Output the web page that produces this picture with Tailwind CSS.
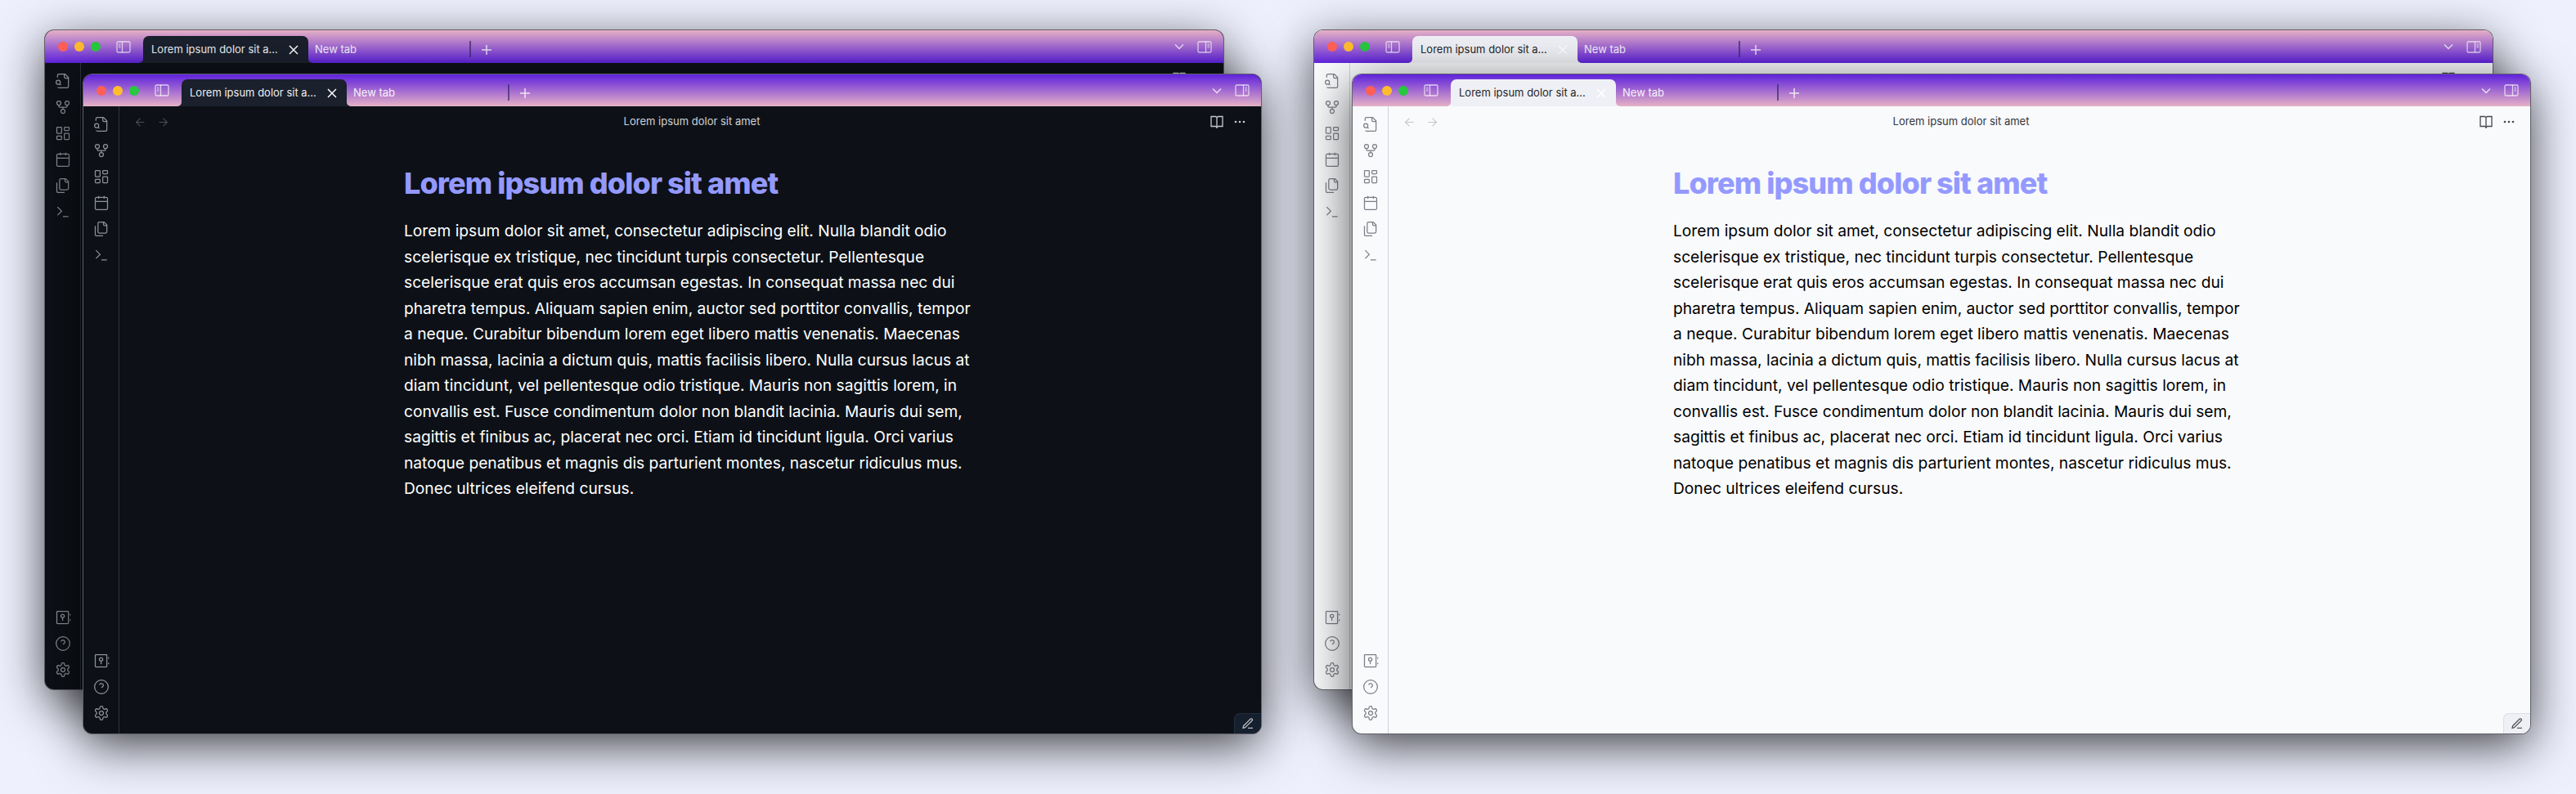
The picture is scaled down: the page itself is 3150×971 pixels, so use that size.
<!DOCTYPE html>
<html>
<head>
<meta charset="utf-8">
<script src="https://cdn.jsdelivr.net/npm/@tailwindcss/browser@4"></script>
</head>
<body class="m-0 bg-[#eef0fe] font-['Inter',sans-serif]">
<svg class="hidden">
<symbol id="filesearch" viewBox="0 0 24 24"><path d="M14 2v4a2 2 0 0 0 2 2h4"/><path d="M4.268 21a2 2 0 0 0 1.727 1H18a2 2 0 0 0 2-2V7l-5-5H6a2 2 0 0 0-2 2v3"/><path d="m9 18-1.5-1.5"/><circle cx="5" cy="14" r="3"/></symbol>
<symbol id="fork" viewBox="0 0 24 24"><circle cx="12" cy="18" r="3"/><circle cx="6" cy="6" r="3"/><circle cx="18" cy="6" r="3"/><path d="M18 9v2c0 .6-.4 1-1 1H7c-.6 0-1-.4-1-1V9"/><path d="M12 12v3"/></symbol>
<symbol id="dash" viewBox="0 0 24 24"><rect x="3" y="3" width="7" height="9" rx="1"/><rect x="14" y="3" width="7" height="5" rx="1"/><rect x="14" y="12" width="7" height="9" rx="1"/><rect x="3" y="16" width="7" height="5" rx="1"/></symbol>
<symbol id="cal" viewBox="0 0 24 24"><path d="M8 2v4"/><path d="M16 2v4"/><rect x="3" y="4" width="18" height="18" rx="2"/><path d="M3 10h18"/></symbol>
<symbol id="files" viewBox="0 0 24 24"><path d="M20 7h-3a2 2 0 0 1-2-2V2"/><path d="M9 18a2 2 0 0 1-2-2V4a2 2 0 0 1 2-2h7l4 4v10a2 2 0 0 1-2 2Z"/><path d="M3 7.6v12.8A1.6 1.6 0 0 0 4.6 22h9.8"/></symbol>
<symbol id="term" viewBox="0 0 24 24"><path d="m4 17 6-6-6-6"/><path d="M12 19h8"/></symbol>
<symbol id="vault" viewBox="0 0 24 24"><rect x="3" y="3" width="17" height="18" rx="1"/><circle cx="11.5" cy="10" r="2.5"/><path d="M11.5 12.5V17"/><path d="M22.5 7v2"/><path d="M22.5 15v2"/></symbol>
<symbol id="help" viewBox="0 0 24 24"><circle cx="12" cy="12" r="10"/><path d="M9.09 9a3 3 0 0 1 5.83 1c0 2-3 3-3 3"/><path d="M12 17h.01"/></symbol>
<symbol id="gear" viewBox="0 0 24 24"><path d="M12.22 2h-.44a2 2 0 0 0-2 2v.18a2 2 0 0 1-1 1.73l-.43.25a2 2 0 0 1-2 0l-.15-.08a2 2 0 0 0-2.73.73l-.22.38a2 2 0 0 0 .73 2.73l.15.1a2 2 0 0 1 1 1.72v.51a2 2 0 0 1-1 1.74l-.15.09a2 2 0 0 0-.73 2.73l.22.38a2 2 0 0 0 2.73.73l.15-.08a2 2 0 0 1 2 0l.43.25a2 2 0 0 1 1 1.73V20a2 2 0 0 0 2 2h.44a2 2 0 0 0 2-2v-.18a2 2 0 0 1 1-1.73l.43-.25a2 2 0 0 1 2 0l.15.08a2 2 0 0 0 2.73-.73l.22-.39a2 2 0 0 0-.73-2.73l-.15-.08a2 2 0 0 1-1-1.74v-.5a2 2 0 0 1 1-1.74l.15-.09a2 2 0 0 0 .73-2.73l-.22-.38a2 2 0 0 0-2.73-.73l-.15.08a2 2 0 0 1-2 0l-.43-.25a2 2 0 0 1-1-1.73V4a2 2 0 0 0-2-2z"/><circle cx="12" cy="12" r="3"/></symbol>
<symbol id="sideL" viewBox="0 0 18 15"><rect x="1" y="1" width="16" height="13" rx="1.5"/><path d="M7.5 1v13"/><path d="M3 4h2.5M3 6h2.5M3 8h2.5" stroke-width="1"/></symbol>
<symbol id="sideR" viewBox="0 0 18 15"><rect x="1" y="1" width="16" height="13" rx="1.5"/><path d="M10.5 1v13"/><path d="M12.5 4H15M12.5 6H15M12.5 8H15" stroke-width="1"/></symbol>
<symbol id="close" viewBox="0 0 24 24"><path d="M18 6 6 18"/><path d="m6 6 12 12"/></symbol>
<symbol id="plus" viewBox="0 0 12 12"><path d="M6 0v12M0 6h12"/></symbol>
<symbol id="chev" viewBox="0 0 12 8"><path d="m1 1.5 5 5 5-5"/></symbol>
<symbol id="left" viewBox="0 0 24 24"><path d="m12 19-7-7 7-7"/><path d="M19 12H5"/></symbol>
<symbol id="right" viewBox="0 0 24 24"><path d="M5 12h14"/><path d="m12 5 7 7-7 7"/></symbol>
<symbol id="book" viewBox="0 0 18 18"><path d="M2 2.5h5.5L9 3.5l1.500-1H16v12h-5.500L9 15.500 7.500 14.500H2z"/><path d="M9 3.500V17"/></symbol>
<symbol id="dots" viewBox="0 0 14 4"><circle cx="2" cy="2" r="1.300"/><circle cx="7" cy="2" r="1.300"/><circle cx="12" cy="2" r="1.300"/></symbol>
<symbol id="pen" viewBox="0 0 24 24"><path d="M12 20h9"/><path d="M16.500 3.500a2.120 2.120 0 0 1 3 3L7 19l-4 1 1-4Z"/></symbol>
<symbol id="flare" viewBox="0 0 5 5"><path d="M5 0v5H0a5 5 0 0 0 5-5z"/></symbol>
</svg>

<main class="relative w-[3150px] h-[971px] overflow-hidden bg-[#eef0fe]">

<!-- DARK BACK -->
<section class="absolute left-[55px] top-[37px] w-[1441px] h-[806px] rounded-[11px] flex flex-col overflow-hidden bg-[#0d1117] shadow-[0_0_0_1px_#60606a,0_15px_60px_rgba(0,0,0,0.7)]">
  <header class="h-10 shrink-0 flex items-end bg-linear-to-b/srgb from-[#e6b1c6] to-[#5e22dc] text-white">
    <div class="w-[120px] h-full flex items-center shrink-0">
      <div class="flex gap-2 pl-4">
        <span class="w-3 h-3 rounded-full bg-[#ff5f57]"></span><span class="w-3 h-3 rounded-full bg-[#febc2e]"></span><span class="w-3 h-3 rounded-full bg-[#28c840]"></span>
      </div>
      <svg class="w-[18px] h-[15px] ml-[19px] fill-none stroke-[1.300] stroke-white/70"><use href="#sideL"/></svg>
    </div>
    <div class="relative w-[202px] h-[33px] rounded-t-[7px] bg-[#1a202c] flex items-center justify-between pl-[10px] pr-2 text-[13px] text-[#eceef2]">
      <svg class="absolute left-[-5px] bottom-0 w-[5px] h-[5px] fill-[#1a202c]"><use href="#flare"/></svg>
      <svg class="absolute right-[-5px] bottom-0 w-[5px] h-[5px] fill-[#1a202c] -scale-x-100"><use href="#flare"/></svg>
      <span class="whitespace-nowrap">Lorem ipsum dolor sit a...</span>
      <svg class="w-5 h-5 fill-none stroke-[1.800] stroke-white"><use href="#close"/></svg>
    </div>
    <div class="w-[199px] h-[33px] flex items-center pl-2 text-[13px] text-white/90 relative">New tab<span class="absolute right-0 top-[6px] w-[2px] h-5 bg-[#3b2a6a]/70"></span></div>
    <div class="h-[33px] flex items-center pl-[13px]"><svg class="w-3 h-3 fill-none stroke-[1.500] stroke-white/80"><use href="#plus"/></svg></div>
    <div class="h-full flex-1 flex items-center justify-end pr-[14px] gap-4">
      <svg class="w-3 h-2 fill-none stroke-[1.300] stroke-white/80"><use href="#chev"/></svg>
      <svg class="w-[18px] h-[15px] fill-none stroke-[1.300] stroke-white/70"><use href="#sideR"/></svg>
    </div>
  </header>
  <div class="flex flex-1 min-h-0">
    <nav class="w-[44px] shrink-0 border-r border-[#2d3340] flex flex-col items-center justify-between pt-3 pb-[14px] text-[#8f9298]">
      <div class="flex flex-col gap-3">
        <svg class="w-5 h-5 fill-none stroke-[1.500] stroke-current"><use href="#filesearch"/></svg>
        <svg class="w-5 h-5 fill-none stroke-[1.500] stroke-current"><use href="#fork"/></svg>
        <svg class="w-5 h-5 fill-none stroke-[1.500] stroke-current"><use href="#dash"/></svg>
        <svg class="w-5 h-5 fill-none stroke-[1.500] stroke-current"><use href="#cal"/></svg>
        <svg class="w-5 h-5 fill-none stroke-[1.500] stroke-current"><use href="#files"/></svg>
        <svg class="w-5 h-5 fill-none stroke-[1.500] stroke-current"><use href="#term"/></svg>
      </div>
      <div class="flex flex-col gap-3">
        <svg class="w-5 h-5 fill-none stroke-[1.500] stroke-current"><use href="#vault"/></svg>
        <svg class="w-5 h-5 fill-none stroke-[1.500] stroke-current"><use href="#help"/></svg>
        <svg class="w-5 h-5 fill-none stroke-[1.500] stroke-current"><use href="#gear"/></svg>
      </div>
    </nav>
    <div class="flex-1 min-w-0">
      <div class="h-[38px] flex items-center justify-end gap-3 pr-[19px] text-[#c8cacd]">
        <svg class="w-[18px] h-[18px] fill-none stroke-[1.300] stroke-current"><use href="#book"/></svg>
        <svg class="w-[14px] h-1 fill-current"><use href="#dots"/></svg>
      </div>
    </div>
  </div>
</section>

<!-- DARK FRONT -->
<section class="absolute left-[102px] top-[91px] w-[1440px] h-[806px] rounded-[11px] flex flex-col overflow-hidden bg-[#0d1117] shadow-[0_0_0_1px_#60606a,0_15px_60px_rgba(0,0,0,0.7)]">
  <header class="h-[39px] shrink-0 flex items-end bg-linear-to-b/srgb from-[#5e22dc] to-[#e6b1c6] text-white">
    <div class="w-[120px] h-full flex items-center shrink-0">
      <div class="flex gap-2 pl-4">
        <span class="w-3 h-3 rounded-full bg-[#ff5f57]"></span><span class="w-3 h-3 rounded-full bg-[#febc2e]"></span><span class="w-3 h-3 rounded-full bg-[#28c840]"></span>
      </div>
      <svg class="w-[18px] h-[15px] ml-[19px] fill-none stroke-[1.300] stroke-white/70"><use href="#sideL"/></svg>
    </div>
    <div class="relative w-[202px] h-[33px] rounded-t-[7px] bg-[#1a202c] flex items-center justify-between pl-[10px] pr-2 text-[13px] text-[#eceef2]">
      <svg class="absolute left-[-5px] bottom-0 w-[5px] h-[5px] fill-[#1a202c]"><use href="#flare"/></svg>
      <svg class="absolute right-[-5px] bottom-0 w-[5px] h-[5px] fill-[#1a202c] -scale-x-100"><use href="#flare"/></svg>
      <span class="whitespace-nowrap">Lorem ipsum dolor sit a...</span>
      <svg class="w-5 h-5 fill-none stroke-[1.800] stroke-white"><use href="#close"/></svg>
    </div>
    <div class="w-[199px] h-[33px] flex items-center pl-2 text-[13px] text-white/90 relative">New tab<span class="absolute right-0 top-[6px] w-[2px] h-5 bg-[#3b2a6a]/70"></span></div>
    <div class="h-[33px] flex items-center pl-[13px]"><svg class="w-3 h-3 fill-none stroke-[1.500] stroke-white/80"><use href="#plus"/></svg></div>
    <div class="h-full flex-1 flex items-center justify-end pr-[14px] gap-4">
      <svg class="w-3 h-2 fill-none stroke-[1.300] stroke-white/80"><use href="#chev"/></svg>
      <svg class="w-[18px] h-[15px] fill-none stroke-[1.300] stroke-white/70"><use href="#sideR"/></svg>
    </div>
  </header>
  <div class="flex flex-1 min-h-0">
    <nav class="w-[44px] shrink-0 border-r border-[#2d3340] flex flex-col items-center justify-between pt-3 pb-[15px] text-[#8f9298]">
      <div class="flex flex-col gap-3">
        <svg class="w-5 h-5 fill-none stroke-[1.500] stroke-current"><use href="#filesearch"/></svg>
        <svg class="w-5 h-5 fill-none stroke-[1.500] stroke-current"><use href="#fork"/></svg>
        <svg class="w-5 h-5 fill-none stroke-[1.500] stroke-current"><use href="#dash"/></svg>
        <svg class="w-5 h-5 fill-none stroke-[1.500] stroke-current"><use href="#cal"/></svg>
        <svg class="w-5 h-5 fill-none stroke-[1.500] stroke-current"><use href="#files"/></svg>
        <svg class="w-5 h-5 fill-none stroke-[1.500] stroke-current"><use href="#term"/></svg>
      </div>
      <div class="flex flex-col gap-3">
        <svg class="w-5 h-5 fill-none stroke-[1.500] stroke-current"><use href="#vault"/></svg>
        <svg class="w-5 h-5 fill-none stroke-[1.500] stroke-current"><use href="#help"/></svg>
        <svg class="w-5 h-5 fill-none stroke-[1.500] stroke-current"><use href="#gear"/></svg>
      </div>
    </nav>
    <div class="relative flex-1 flex flex-col min-w-0">
      <div class="h-[38px] flex items-center justify-between pl-[17px] pr-[19px] text-[#9a9da3]">
        <div class="flex gap-[11px] text-[#4a4d53]">
          <svg class="w-[17px] h-[17px] fill-none stroke-[1.500] stroke-current"><use href="#left"/></svg>
          <svg class="w-[17px] h-[17px] fill-none stroke-[1.500] stroke-current"><use href="#right"/></svg>
        </div>
        <span class="ml-[5px] text-[13px] text-[#cfd2d6]">Lorem ipsum dolor sit amet</span>
        <div class="flex items-center gap-3 text-[#c8cacd]">
          <svg class="w-[18px] h-[18px] fill-none stroke-[1.300] stroke-current"><use href="#book"/></svg>
          <svg class="w-[14px] h-1 fill-current"><use href="#dots"/></svg>
        </div>
      </div>
      <article class="w-[700px] mx-auto pt-[34px] text-white">
        <h1 class="text-[36px] leading-[44px] font-extrabold tracking-[-0.025em] text-[#9499ff]">Lorem ipsum dolor sit amet</h1>
        <p class="mt-[21px] text-[19.200px] leading-[31.500px]">Lorem ipsum dolor sit amet, consectetur adipiscing elit. Nulla blandit odio scelerisque ex tristique, nec tincidunt turpis consectetur. Pellentesque scelerisque erat quis eros accumsan egestas. In consequat massa nec dui pharetra tempus. Aliquam sapien enim, auctor sed porttitor convallis, tempor a neque. Curabitur bibendum lorem eget libero mattis venenatis. Maecenas nibh massa, lacinia a dictum quis, mattis facilisis libero. Nulla cursus lacus at diam tincidunt, vel pellentesque odio tristique. Mauris non sagittis lorem, in convallis est. Fusce condimentum dolor non blandit lacinia. Mauris dui sem, sagittis et finibus ac, placerat nec orci. Etiam id tincidunt ligula. Orci varius natoque penatibus et magnis dis parturient montes, nascetur ridiculus mus. Donec ultrices eleifend cursus.</p>
      </article>
      <div class="absolute right-0 bottom-0 w-[33px] h-[25px] rounded-tl-[7px] bg-[#161f2e] border-l border-t border-[#232c3c] flex items-center justify-center text-[#b9bbbf]">
        <svg class="w-4 h-4 fill-none stroke-2 stroke-current"><use href="#pen"/></svg>
      </div>
    </div>
  </div>
</section>

<!-- LIGHT BACK -->
<section class="absolute left-[1607px] top-[37px] w-[1441px] h-[806px] rounded-[11px] flex flex-col overflow-hidden bg-[#f9fafc] shadow-[0_0_0_1px_#60606a,0_15px_60px_rgba(0,0,0,0.7)]">
  <header class="h-10 shrink-0 flex items-end bg-linear-to-b/srgb from-[#e6b1c6] to-[#5e22dc] text-white">
    <div class="w-[120px] h-full flex items-center shrink-0">
      <div class="flex gap-2 pl-4">
        <span class="w-3 h-3 rounded-full bg-[#ff5f57]"></span><span class="w-3 h-3 rounded-full bg-[#febc2e]"></span><span class="w-3 h-3 rounded-full bg-[#28c840]"></span>
      </div>
      <svg class="w-[18px] h-[15px] ml-[19px] fill-none stroke-[1.300] stroke-white/70"><use href="#sideL"/></svg>
    </div>
    <div class="relative w-[202px] h-[33px] rounded-t-[7px] bg-[#eff0f5] flex items-center justify-between pl-[10px] pr-2 text-[13px] text-[#24262b]">
      <svg class="absolute left-[-5px] bottom-0 w-[5px] h-[5px] fill-[#eff0f5]"><use href="#flare"/></svg>
      <svg class="absolute right-[-5px] bottom-0 w-[5px] h-[5px] fill-[#eff0f5] -scale-x-100"><use href="#flare"/></svg>
      <span class="whitespace-nowrap">Lorem ipsum dolor sit a...</span>
      <svg class="w-5 h-5 fill-none stroke-[1.800] stroke-white"><use href="#close"/></svg>
    </div>
    <div class="w-[199px] h-[33px] flex items-center pl-2 text-[13px] text-white/90 relative">New tab<span class="absolute right-0 top-[6px] w-[2px] h-5 bg-[#3b2a6a]/70"></span></div>
    <div class="h-[33px] flex items-center pl-[13px]"><svg class="w-3 h-3 fill-none stroke-[1.500] stroke-white/80"><use href="#plus"/></svg></div>
    <div class="h-full flex-1 flex items-center justify-end pr-[14px] gap-4">
      <svg class="w-3 h-2 fill-none stroke-[1.300] stroke-white/80"><use href="#chev"/></svg>
      <svg class="w-[18px] h-[15px] fill-none stroke-[1.300] stroke-white/70"><use href="#sideR"/></svg>
    </div>
  </header>
  <div class="flex flex-1 min-h-0">
    <nav class="w-[44px] shrink-0 border-r border-[#cfd2dc] flex flex-col items-center justify-between pt-3 pb-[14px] text-[#7b7e85]">
      <div class="flex flex-col gap-3">
        <svg class="w-5 h-5 fill-none stroke-[1.500] stroke-current"><use href="#filesearch"/></svg>
        <svg class="w-5 h-5 fill-none stroke-[1.500] stroke-current"><use href="#fork"/></svg>
        <svg class="w-5 h-5 fill-none stroke-[1.500] stroke-current"><use href="#dash"/></svg>
        <svg class="w-5 h-5 fill-none stroke-[1.500] stroke-current"><use href="#cal"/></svg>
        <svg class="w-5 h-5 fill-none stroke-[1.500] stroke-current"><use href="#files"/></svg>
        <svg class="w-5 h-5 fill-none stroke-[1.500] stroke-current"><use href="#term"/></svg>
      </div>
      <div class="flex flex-col gap-3">
        <svg class="w-5 h-5 fill-none stroke-[1.500] stroke-current"><use href="#vault"/></svg>
        <svg class="w-5 h-5 fill-none stroke-[1.500] stroke-current"><use href="#help"/></svg>
        <svg class="w-5 h-5 fill-none stroke-[1.500] stroke-current"><use href="#gear"/></svg>
      </div>
    </nav>
    <div class="flex-1 min-w-0">
      <div class="h-[38px] flex items-center justify-end gap-3 pr-[19px] text-[#45474c]">
        <svg class="w-[18px] h-[18px] fill-none stroke-[1.300] stroke-current"><use href="#book"/></svg>
        <svg class="w-[14px] h-1 fill-current"><use href="#dots"/></svg>
      </div>
    </div>
  </div>
</section>

<!-- LIGHT FRONT -->
<section class="absolute left-[1654px] top-[91px] w-[1440px] h-[806px] rounded-[11px] flex flex-col overflow-hidden bg-[#f9fafc] shadow-[0_0_0_1px_#60606a,0_15px_60px_rgba(0,0,0,0.7)]">
  <header class="h-[39px] shrink-0 flex items-end bg-linear-to-b/srgb from-[#5e22dc] to-[#e6b1c6] text-white">
    <div class="w-[120px] h-full flex items-center shrink-0">
      <div class="flex gap-2 pl-4">
        <span class="w-3 h-3 rounded-full bg-[#ff5f57]"></span><span class="w-3 h-3 rounded-full bg-[#febc2e]"></span><span class="w-3 h-3 rounded-full bg-[#28c840]"></span>
      </div>
      <svg class="w-[18px] h-[15px] ml-[19px] fill-none stroke-[1.300] stroke-white/70"><use href="#sideL"/></svg>
    </div>
    <div class="relative w-[202px] h-[33px] rounded-t-[7px] bg-[#eff0f5] flex items-center justify-between pl-[10px] pr-2 text-[13px] text-[#24262b]">
      <svg class="absolute left-[-5px] bottom-0 w-[5px] h-[5px] fill-[#eff0f5]"><use href="#flare"/></svg>
      <svg class="absolute right-[-5px] bottom-0 w-[5px] h-[5px] fill-[#eff0f5] -scale-x-100"><use href="#flare"/></svg>
      <span class="whitespace-nowrap">Lorem ipsum dolor sit a...</span>
      <svg class="w-5 h-5 fill-none stroke-[1.800] stroke-white"><use href="#close"/></svg>
    </div>
    <div class="w-[199px] h-[33px] flex items-center pl-2 text-[13px] text-white/90 relative">New tab<span class="absolute right-0 top-[6px] w-[2px] h-5 bg-[#3b2a6a]/70"></span></div>
    <div class="h-[33px] flex items-center pl-[13px]"><svg class="w-3 h-3 fill-none stroke-[1.500] stroke-white/80"><use href="#plus"/></svg></div>
    <div class="h-full flex-1 flex items-center justify-end pr-[14px] gap-4">
      <svg class="w-3 h-2 fill-none stroke-[1.300] stroke-white/80"><use href="#chev"/></svg>
      <svg class="w-[18px] h-[15px] fill-none stroke-[1.300] stroke-white/70"><use href="#sideR"/></svg>
    </div>
  </header>
  <div class="flex flex-1 min-h-0">
    <nav class="w-[44px] shrink-0 border-r border-[#cfd2dc] flex flex-col items-center justify-between pt-3 pb-[15px] text-[#7b7e85]">
      <div class="flex flex-col gap-3">
        <svg class="w-5 h-5 fill-none stroke-[1.500] stroke-current"><use href="#filesearch"/></svg>
        <svg class="w-5 h-5 fill-none stroke-[1.500] stroke-current"><use href="#fork"/></svg>
        <svg class="w-5 h-5 fill-none stroke-[1.500] stroke-current"><use href="#dash"/></svg>
        <svg class="w-5 h-5 fill-none stroke-[1.500] stroke-current"><use href="#cal"/></svg>
        <svg class="w-5 h-5 fill-none stroke-[1.500] stroke-current"><use href="#files"/></svg>
        <svg class="w-5 h-5 fill-none stroke-[1.500] stroke-current"><use href="#term"/></svg>
      </div>
      <div class="flex flex-col gap-3">
        <svg class="w-5 h-5 fill-none stroke-[1.500] stroke-current"><use href="#vault"/></svg>
        <svg class="w-5 h-5 fill-none stroke-[1.500] stroke-current"><use href="#help"/></svg>
        <svg class="w-5 h-5 fill-none stroke-[1.500] stroke-current"><use href="#gear"/></svg>
      </div>
    </nav>
    <div class="relative flex-1 flex flex-col min-w-0">
      <div class="h-[38px] flex items-center justify-between pl-[17px] pr-[19px]">
        <div class="flex gap-[11px] text-[#c4c6cc]">
          <svg class="w-[17px] h-[17px] fill-none stroke-[1.500] stroke-current"><use href="#left"/></svg>
          <svg class="w-[17px] h-[17px] fill-none stroke-[1.500] stroke-current"><use href="#right"/></svg>
        </div>
        <span class="ml-[5px] text-[13px] text-[#33353a]">Lorem ipsum dolor sit amet</span>
        <div class="flex items-center gap-3 text-[#45474c]">
          <svg class="w-[18px] h-[18px] fill-none stroke-[1.300] stroke-current"><use href="#book"/></svg>
          <svg class="w-[14px] h-1 fill-current"><use href="#dots"/></svg>
        </div>
      </div>
      <article class="w-[700px] mx-auto pt-[34px] text-black">
        <h1 class="text-[36px] leading-[44px] font-extrabold tracking-[-0.025em] text-[#9499ff]">Lorem ipsum dolor sit amet</h1>
        <p class="mt-[21px] text-[19.200px] leading-[31.500px]">Lorem ipsum dolor sit amet, consectetur adipiscing elit. Nulla blandit odio scelerisque ex tristique, nec tincidunt turpis consectetur. Pellentesque scelerisque erat quis eros accumsan egestas. In consequat massa nec dui pharetra tempus. Aliquam sapien enim, auctor sed porttitor convallis, tempor a neque. Curabitur bibendum lorem eget libero mattis venenatis. Maecenas nibh massa, lacinia a dictum quis, mattis facilisis libero. Nulla cursus lacus at diam tincidunt, vel pellentesque odio tristique. Mauris non sagittis lorem, in convallis est. Fusce condimentum dolor non blandit lacinia. Mauris dui sem, sagittis et finibus ac, placerat nec orci. Etiam id tincidunt ligula. Orci varius natoque penatibus et magnis dis parturient montes, nascetur ridiculus mus. Donec ultrices eleifend cursus.</p>
      </article>
      <div class="absolute right-0 bottom-0 w-[33px] h-[25px] rounded-tl-[7px] bg-[#eff0f5] border-l border-t border-[#dcdee6] flex items-center justify-center text-[#55575c]">
        <svg class="w-4 h-4 fill-none stroke-2 stroke-current"><use href="#pen"/></svg>
      </div>
    </div>
  </div>
</section>
</main>
</body>
</html>
